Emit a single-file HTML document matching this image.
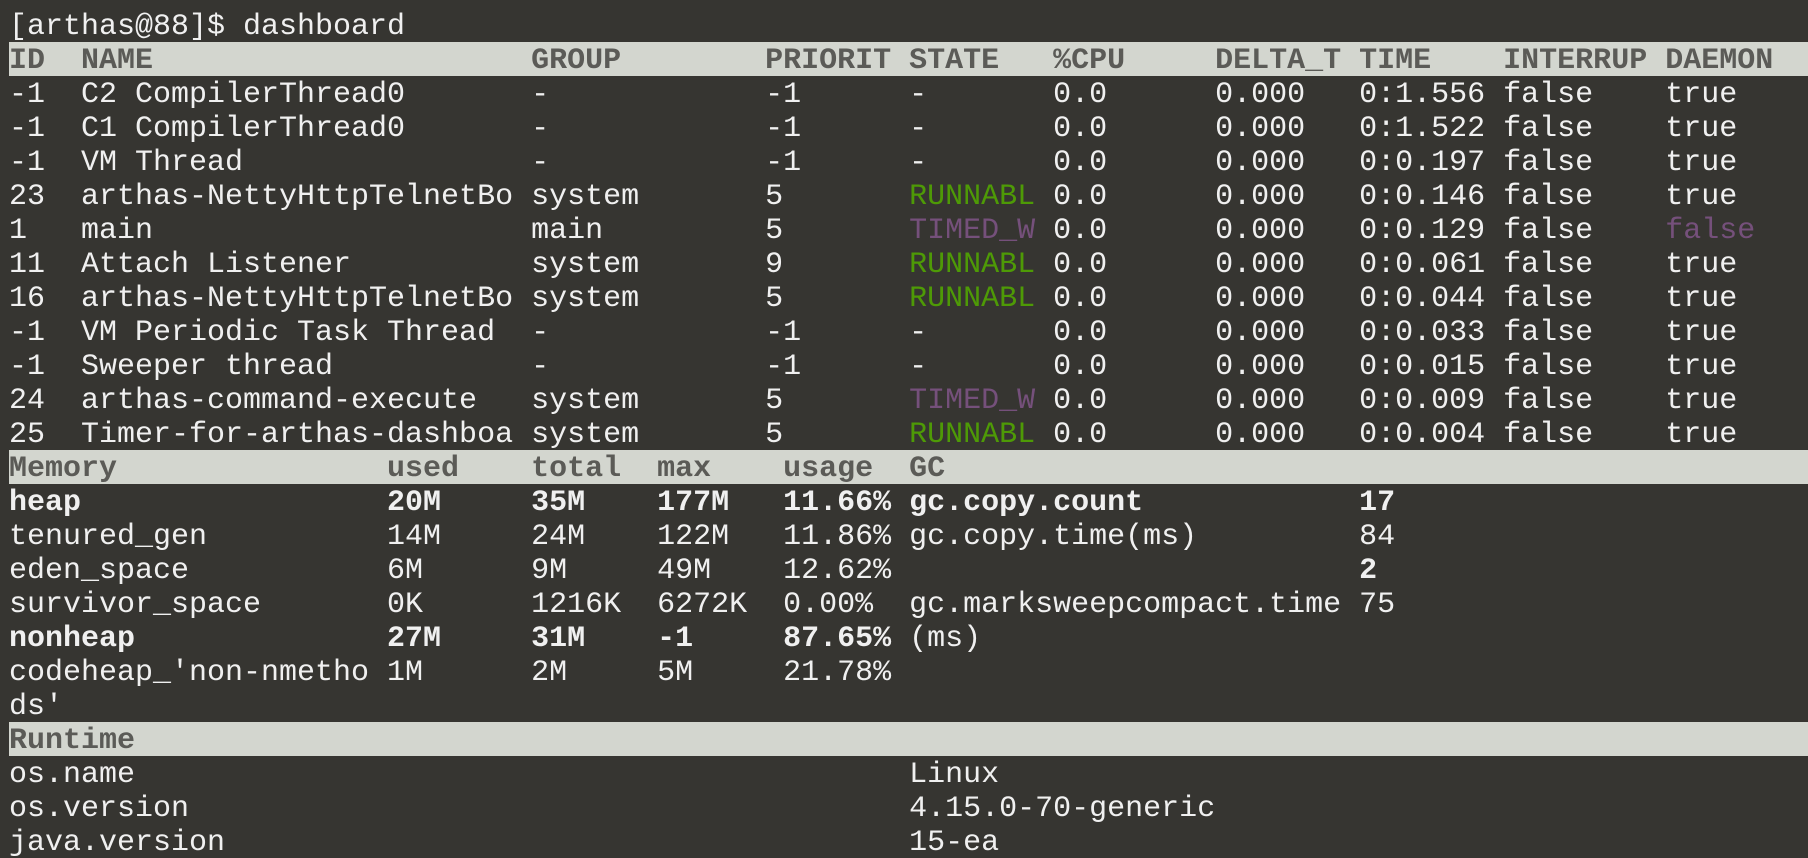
<!DOCTYPE html>
<html><head><style>
html,body{margin:0;padding:0;background:#363531;width:1808px;height:858px;overflow:hidden}
.t{position:absolute;left:9px;top:8px;right:0;font-family:"Liberation Mono",monospace;font-size:30px;color:#f0f0f0}
.r{height:34px;box-sizing:border-box;padding-top:4px;line-height:30px;white-space:pre}
.r span{display:inline-block;white-space:pre;overflow:hidden;vertical-align:top}
.h{background:#d3d6cf;color:#5b5b57;font-weight:bold}
.g{color:#4e9a06}.p{color:#75507b}.b{font-weight:bold}
.c0{width:4ch}.c1{width:25ch}.c2{width:13ch}.c3{width:8ch}.c4{width:8ch}.c5{width:9ch}.c6{width:8ch}.c7{width:8ch}.c8{width:9ch}
.m0{width:21ch}.m1{width:8ch}.m2{width:7ch}.m3{width:7ch}.m4{width:7ch}.m5{width:25ch}
.k{width:50ch}
</style></head><body><div class="t"><div class="r">[arthas@88]$ dashboard</div><div class="r h"><span class="c0">ID</span><span class="c1">NAME</span><span class="c2">GROUP</span><span class="c3">PRIORIT</span><span class="c4">STATE</span><span class="c5">%CPU</span><span class="c6">DELTA_T</span><span class="c7">TIME</span><span class="c8">INTERRUP</span><span>DAEMON</span></div><div class="r"><span class="c0">-1</span><span class="c1">C2 CompilerThread0</span><span class="c2">-</span><span class="c3">-1</span><span class="c4">-</span><span class="c5">0.0</span><span class="c6">0.000</span><span class="c7">0:1.556</span><span class="c8">false</span><span>true</span></div><div class="r"><span class="c0">-1</span><span class="c1">C1 CompilerThread0</span><span class="c2">-</span><span class="c3">-1</span><span class="c4">-</span><span class="c5">0.0</span><span class="c6">0.000</span><span class="c7">0:1.522</span><span class="c8">false</span><span>true</span></div><div class="r"><span class="c0">-1</span><span class="c1">VM Thread</span><span class="c2">-</span><span class="c3">-1</span><span class="c4">-</span><span class="c5">0.0</span><span class="c6">0.000</span><span class="c7">0:0.197</span><span class="c8">false</span><span>true</span></div><div class="r"><span class="c0">23</span><span class="c1">arthas-NettyHttpTelnetBo</span><span class="c2">system</span><span class="c3">5</span><span class="c4 g">RUNNABL</span><span class="c5">0.0</span><span class="c6">0.000</span><span class="c7">0:0.146</span><span class="c8">false</span><span>true</span></div><div class="r"><span class="c0">1</span><span class="c1">main</span><span class="c2">main</span><span class="c3">5</span><span class="c4 p">TIMED_W</span><span class="c5">0.0</span><span class="c6">0.000</span><span class="c7">0:0.129</span><span class="c8">false</span><span class="p">false</span></div><div class="r"><span class="c0">11</span><span class="c1">Attach Listener</span><span class="c2">system</span><span class="c3">9</span><span class="c4 g">RUNNABL</span><span class="c5">0.0</span><span class="c6">0.000</span><span class="c7">0:0.061</span><span class="c8">false</span><span>true</span></div><div class="r"><span class="c0">16</span><span class="c1">arthas-NettyHttpTelnetBo</span><span class="c2">system</span><span class="c3">5</span><span class="c4 g">RUNNABL</span><span class="c5">0.0</span><span class="c6">0.000</span><span class="c7">0:0.044</span><span class="c8">false</span><span>true</span></div><div class="r"><span class="c0">-1</span><span class="c1">VM Periodic Task Thread</span><span class="c2">-</span><span class="c3">-1</span><span class="c4">-</span><span class="c5">0.0</span><span class="c6">0.000</span><span class="c7">0:0.033</span><span class="c8">false</span><span>true</span></div><div class="r"><span class="c0">-1</span><span class="c1">Sweeper thread</span><span class="c2">-</span><span class="c3">-1</span><span class="c4">-</span><span class="c5">0.0</span><span class="c6">0.000</span><span class="c7">0:0.015</span><span class="c8">false</span><span>true</span></div><div class="r"><span class="c0">24</span><span class="c1">arthas-command-execute</span><span class="c2">system</span><span class="c3">5</span><span class="c4 p">TIMED_W</span><span class="c5">0.0</span><span class="c6">0.000</span><span class="c7">0:0.009</span><span class="c8">false</span><span>true</span></div><div class="r"><span class="c0">25</span><span class="c1">Timer-for-arthas-dashboa</span><span class="c2">system</span><span class="c3">5</span><span class="c4 g">RUNNABL</span><span class="c5">0.0</span><span class="c6">0.000</span><span class="c7">0:0.004</span><span class="c8">false</span><span>true</span></div><div class="r h"><span class="m0">Memory</span><span class="m1">used</span><span class="m2">total</span><span class="m3">max</span><span class="m4">usage</span><span class="m5">GC</span></div><div class="r b"><span class="m0">heap</span><span class="m1">20M</span><span class="m2">35M</span><span class="m3">177M</span><span class="m4">11.66%</span><span class="m5">gc.copy.count</span><span>17</span></div><div class="r"><span class="m0">tenured_gen</span><span class="m1">14M</span><span class="m2">24M</span><span class="m3">122M</span><span class="m4">11.86%</span><span class="m5">gc.copy.time(ms)</span><span>84</span></div><div class="r"><span class="m0">eden_space</span><span class="m1">6M</span><span class="m2">9M</span><span class="m3">49M</span><span class="m4">12.62%</span><span class="m5"></span><span class="b">2</span></div><div class="r"><span class="m0">survivor_space</span><span class="m1">0K</span><span class="m2">1216K</span><span class="m3">6272K</span><span class="m4">0.00%</span><span class="m5">gc.marksweepcompact.time</span><span>75</span></div><div class="r"><span class="m0 b">nonheap</span><span class="m1 b">27M</span><span class="m2 b">31M</span><span class="m3 b">-1</span><span class="m4 b">87.65%</span><span class="m5">(ms)</span></div><div class="r"><span class="m0">codeheap_'non-nmetho</span><span class="m1">1M</span><span class="m2">2M</span><span class="m3">5M</span><span class="m4">21.78%</span></div><div class="r">ds'</div><div class="r h">Runtime</div><div class="r"><span class="k">os.name</span><span>Linux</span></div><div class="r"><span class="k">os.version</span><span>4.15.0-70-generic</span></div><div class="r"><span class="k">java.version</span><span>15-ea</span></div></div></body></html>
